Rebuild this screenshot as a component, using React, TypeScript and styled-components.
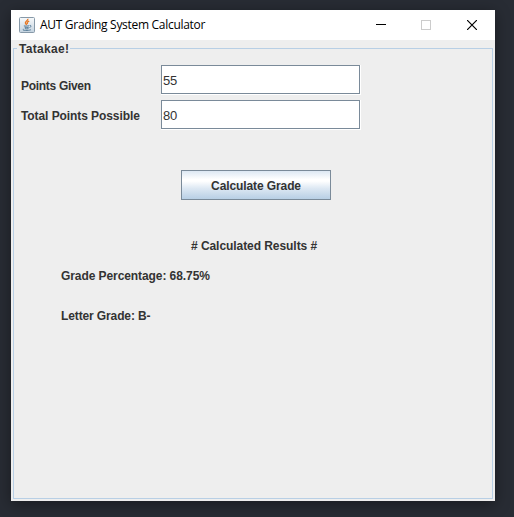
import React from 'react';
import styled, { createGlobalStyle } from 'styled-components';

const GlobalStyle = createGlobalStyle`
  * { box-sizing: border-box; }
  html, body { margin: 0; background: #282c34; }
`;

const Desktop = styled.div`
  width: 514px;
  height: 517px;
  padding: 10px 19px 16px 11px;
  overflow: hidden;
  background: #282c34;
`;

const Window = styled.main`
  display: flex;
  flex-direction: column;
  width: 484px;
  height: 491px;
  background: #eeeeee;
  box-shadow: 0 3px 14px rgba(0, 0, 0, 0.4);
`;

const TitleBar = styled.header`
  display: flex;
  align-items: center;
  height: 30px;
  flex: none;
  padding-left: 8px;
  background: #fff;
`;

const Title = styled.h1<{ $spacing: number }>`
  flex: 1;
  margin: 0 0 0 5px;
  font: 400 12px/16px 'Open Sans', 'Noto Sans', sans-serif;
  letter-spacing: ${(p) => p.$spacing}px;
  white-space: nowrap;
  color: #000;
`;

const WindowButton = styled.button<{ $color?: string; $nudge?: number }>`
  display: flex;
  align-items: center;
  justify-content: center;
  width: 46px;
  height: 30px;
  padding: 0 0 0 ${(p) => p.$nudge ?? 0}px;
  border: 0;
  background: none;
  color: ${(p) => p.$color ?? '#000'};
`;

const Panel = styled.fieldset`
  display: flex;
  flex-direction: column;
  min-width: 0;
  width: 480px;
  height: 459px;
  margin: 0 0 0 2px;
  padding: 8px 7px 0;
  border: 1px solid #b8cfe5;
`;

const Caption = styled.legend`
  height: 17px;
  margin-left: -4px;
  padding: 1px 1px 0 2px;
  font: 700 12px/17px 'Liberation Sans', Arial, sans-serif;
  letter-spacing: 0.3px;
  color: #333;
`;

const FormRow = styled.div`
  display: flex;
  height: 30px;
  margin-bottom: 5px;
`;

const Label = styled.label<{ $drop: number; $spacing: number }>`
  width: 140px;
  padding-top: ${(p) => p.$drop}px;
  font: 700 12px/16px 'Liberation Sans', Arial, sans-serif;
  letter-spacing: ${(p) => p.$spacing}px;
  white-space: nowrap;
  color: #333;
`;

const FieldFrame = styled.div`
  width: 200px;
  height: 30px;
  border: solid #fff;
  border-width: 0 1px 1px 0;
`;

const Field = styled.input`
  display: block;
  width: 199px;
  height: 29px;
  padding: 1px 1px 0;
  border: 1px solid #7a8a99;
  border-radius: 0;
  outline: 0;
  background: #fff;
  font: 400 13px 'Liberation Sans', Arial, sans-serif;
  letter-spacing: -0.2px;
  color: #333;
`;

const Calculate = styled.button`
  width: 150px;
  height: 30px;
  margin: 35px 0 0 160px;
  padding: 1px 0 0;
  border: 1px solid #7a8a99;
  background: linear-gradient(#dde8f3 0%, #fff 30%, #fff 36%, #dde8f3 62%, #b8cfe5 100%);
  font: 700 12px/16px 'Liberation Sans', Arial, sans-serif;
  letter-spacing: -0.1px;
  color: #333;
`;

const Result = styled.p<{ $indent: number; $gap: number; $spacing: number }>`
  margin: ${(p) => p.$gap}px 0 0 ${(p) => p.$indent}px;
  font: 700 12px/16px 'Liberation Sans', Arial, sans-serif;
  letter-spacing: ${(p) => p.$spacing}px;
  color: #333;
`;

const JavaIcon = () => (
  <svg width="16" height="16" viewBox="0 0 16 16" fill="none">
    <defs>
      <linearGradient id="tile" x1="0" y1="0" x2="0" y2="1">
        <stop offset="0" stopColor="#f8fafb" />
        <stop offset="1" stopColor="#c3d2df" />
      </linearGradient>
    </defs>
    <rect x=".5" y=".5" width="15" height="15" rx="1" fill="url(#tile)" stroke="#8799a8" />
    <path d="M8.8 1.8c.8 1.8-3 2.6-2.4 4.2.2.8 1 1.2 1.2 2M10.2 4.2C7.8 5.2 8 6 8.6 7" stroke="#e87722" strokeWidth="1.3" />
    <path d="M5.2 8.500c-1.400.7 3 .8 5 .1M5.600 10.200c1.200.5 3 .5 4.200 0M5.900 11.600c1.200.4 2.500.4 3.600 0M10.800 8.500c2-.3 1.400 1.600-.3 2M4.500 12.200c-3 1.500 7 1.700 7.500.2" stroke="#4b728f" strokeWidth=".9" />
  </svg>
);

export default function App() {
  return (
    <>
      <GlobalStyle />
      <Desktop>
        <Window>
          <TitleBar>
            <JavaIcon />
            <Title $spacing={-0.3}>AUT Grading System Calculator</Title>
            <WindowButton aria-label="Minimize" $nudge={2}>
              <svg width="10" height="10" shapeRendering="crispEdges"><path d="M0 4.5H10" stroke="currentColor" /></svg>
            </WindowButton>
            <WindowButton aria-label="Maximize" $color="#ccc" disabled>
              <svg width="10" height="10"><rect x=".5" y=".5" width="9" height="9" fill="none" stroke="currentColor" /></svg>
            </WindowButton>
            <WindowButton aria-label="Close">
              <svg width="10" height="10"><path d="M0 0L10 10M10 0L0 10" stroke="currentColor" strokeWidth="1.2" /></svg>
            </WindowButton>
          </TitleBar>
          <Panel>
            <Caption>Tatakae!</Caption>
            <FormRow>
              <Label htmlFor="given" $drop={13} $spacing={-0.3}>Points Given</Label>
              <FieldFrame><Field id="given" defaultValue="55" /></FieldFrame>
            </FormRow>
            <FormRow>
              <Label htmlFor="total" $drop={8} $spacing={-0.08}>Total Points Possible</Label>
              <FieldFrame><Field id="total" defaultValue="80" /></FieldFrame>
            </FormRow>
            <Calculate>Calculate Grade</Calculate>
            <Result $indent={170} $gap={38} $spacing={-0.06}># Calculated Results #</Result>
            <Result $indent={40} $gap={14} $spacing={-0.08}>Grade Percentage: 68.75%</Result>
            <Result $indent={40} $gap={24} $spacing={-0.12}>Letter Grade: B-</Result>
          </Panel>
        </Window>
      </Desktop>
    </>
  );
}
